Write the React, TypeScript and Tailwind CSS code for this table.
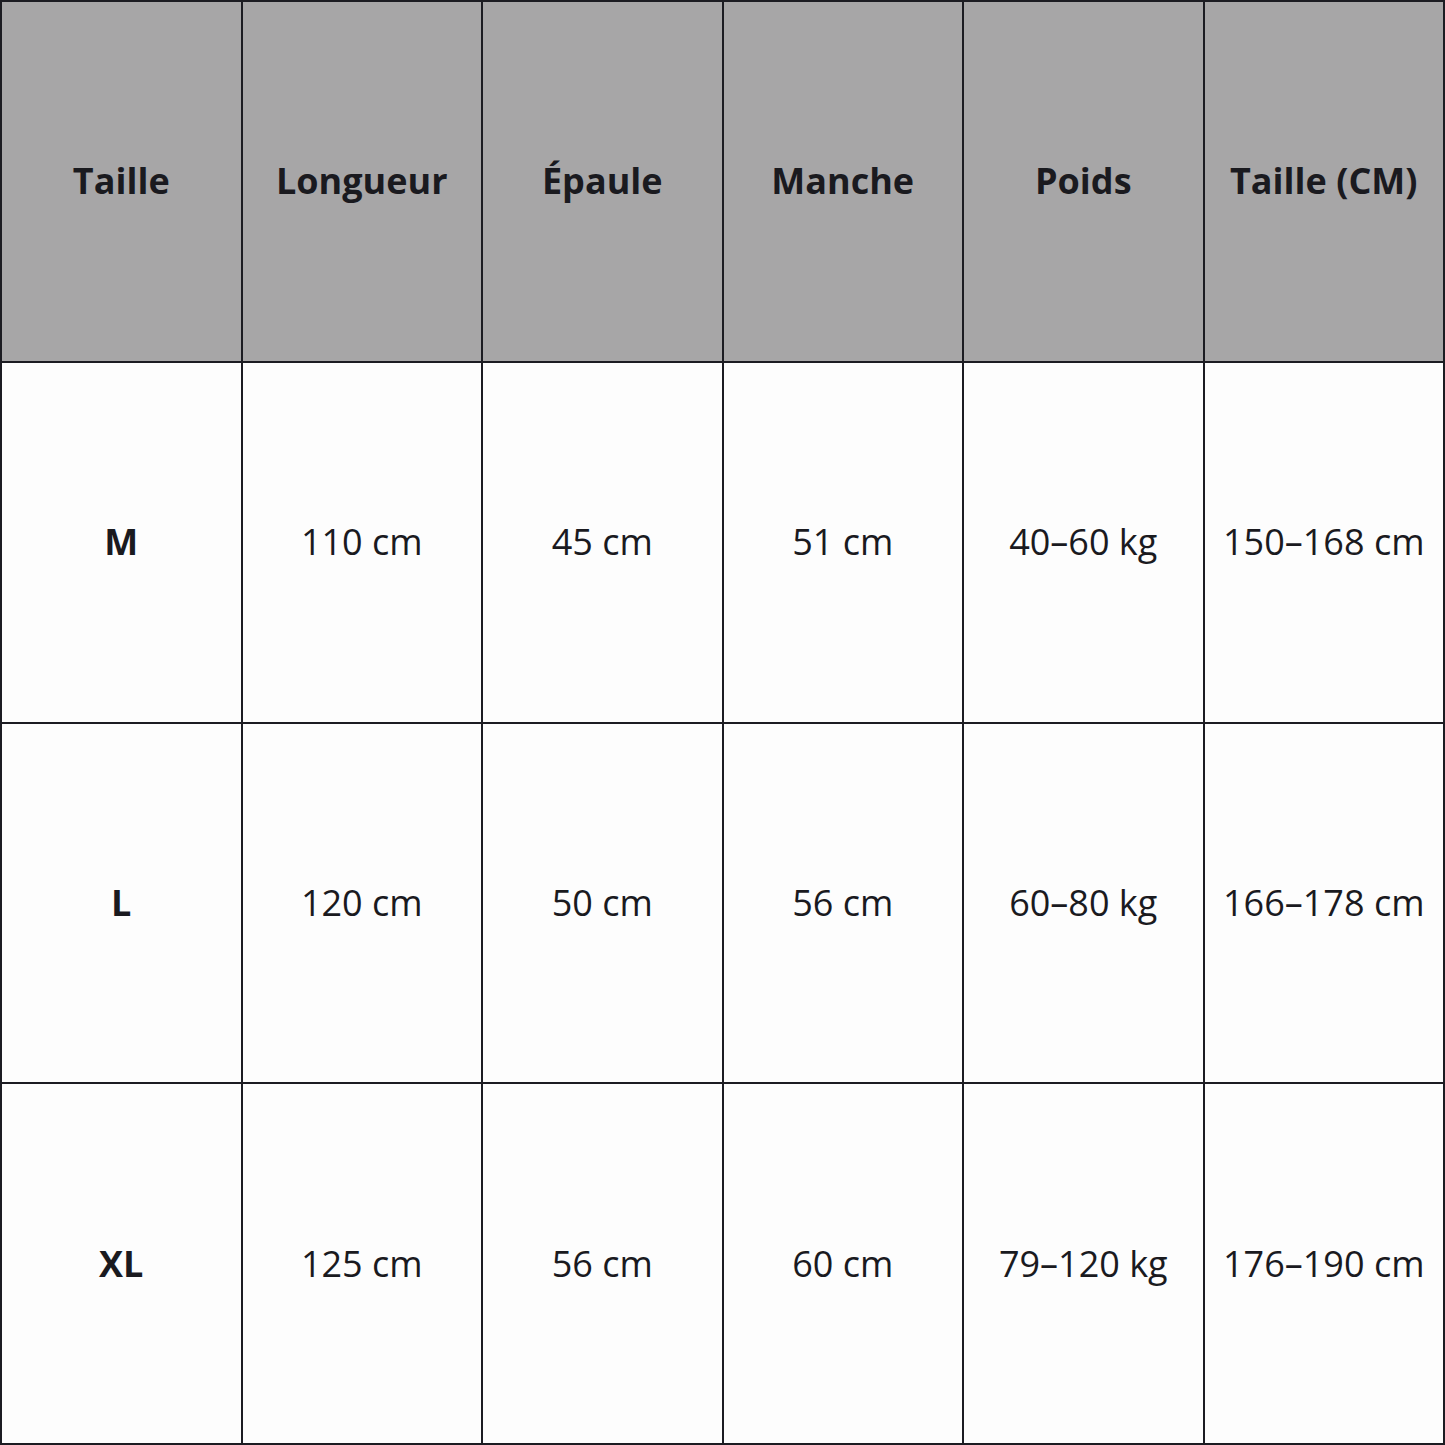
const HEADERS = ["Taille", "Longueur", "Épaule", "Manche", "Poids", "Taille (CM)"];

const ROWS: string[][] = [
  ["M", "110 cm", "45 cm", "51 cm", "40–60 kg", "150–168 cm"],
  ["L", "120 cm", "50 cm", "56 cm", "60–80 kg", "166–178 cm"],
  ["XL", "125 cm", "56 cm", "60 cm", "79–120 kg", "176–190 cm"],
];

export default function App() {
  return (
    <div
      className="grid h-[1445px] w-[1445px] grid-cols-6 grid-rows-4 border-l-2 border-t-2 border-[#1c1c22] bg-white text-[#1a1a1f]"
      style={{ fontFamily: '"Open Sans", "Noto Sans", sans-serif' }}
    >
      {HEADERS.map((h) => (
        <div
          key={h}
          className="flex items-center justify-center border-b-2 border-r-2 border-[#1c1c22] bg-[#a7a6a7] text-[36px] font-bold"
        >
          {h}
        </div>
      ))}
      {ROWS.map((row) =>
        row.map((cell, i) => (
          <div
            key={row[0] + i}
            className={`flex items-center justify-center border-b-2 border-r-2 border-[#1c1c22] bg-[#fdfdfd] text-[36px] ${
              i === 0 ? "font-bold" : "font-normal"
            }`}
          >
            {cell}
          </div>
        )),
      )}
    </div>
  );
}
